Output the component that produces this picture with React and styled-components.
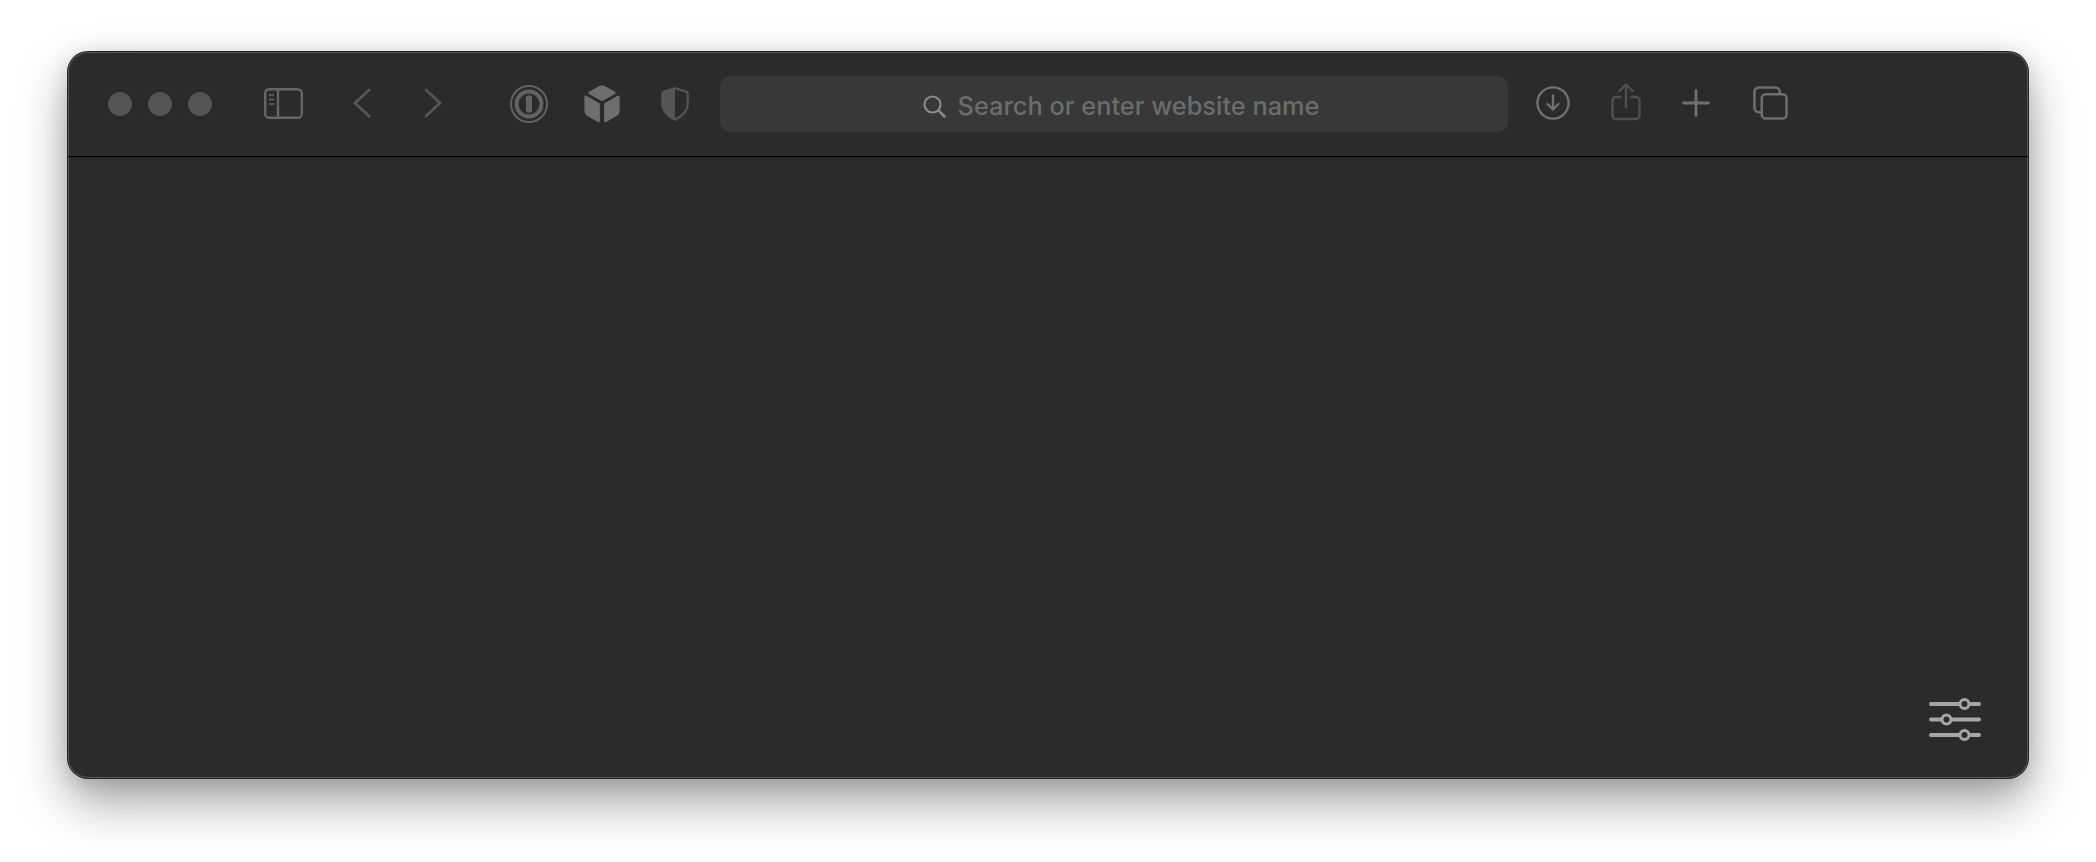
import React from "react";
import styled, { createGlobalStyle } from "styled-components";

const Global = createGlobalStyle`
  html, body { margin: 0; padding: 0; background: #fff; }
  body { width: 2096px; height: 862px; overflow: hidden; font-family: Inter, "Noto Sans", sans-serif; }
`;

const Page = styled.div`
  box-sizing: border-box;
  width: 2096px;
  height: 862px;
  padding: 52px 68px 84px;
  background: #fff;
`;

const Window = styled.main`
  box-sizing: border-box;
  display: flex;
  flex-direction: column;
  height: 726px;
  border-radius: 20px;
  background: #2b2b2b;
  overflow: hidden;
  box-shadow: 0 0 0 1px #242424, inset 0 0 0 1px #565656, 0 24px 50px rgba(0, 0, 0, 0.36), 0 4px 24px rgba(0, 0, 0, 0.14);
`;

const Toolbar = styled.header`
  box-sizing: border-box;
  flex: none;
  height: 105px;
  display: flex;
  align-items: flex-start;
  padding: 0 0 0 40px;
  border-bottom: 1px solid #000;
  box-shadow: 0 1px 0 rgba(0, 0, 0, 0.2);
`;

const Lights = styled.div`
  display: flex;
  gap: 16px;
  margin-top: 40px;
`;

const Light = styled.span`
  width: 24px;
  height: 24px;
  border-radius: 50%;
  background: #545454;
`;

const Slot = styled.div`
  flex: none;
  display: flex;
  margin-left: ${(p) => p.$left}px;
  margin-top: ${(p) => p.$top}px;
  color: ${(p) => p.$color};
`;

const AddressBar = styled.div`
  flex: none;
  box-sizing: border-box;
  width: 788px;
  height: 56px;
  margin: 24px 0 0 31px;
  padding: 4px 0 0 14px;
  display: flex;
  align-items: center;
  justify-content: center;
  gap: 12px;
  border-radius: 10px;
  background: #383838;
`;

const SearchGlyph = styled.span`
  display: flex;
  color: #8a8a8a;
`;

const Placeholder = styled.span`
  color: #6c6c6c;
  font-size: 25.35px;
  line-height: 30px;
  font-weight: 500;
  white-space: nowrap;
`;

const Content = styled.section`
  flex: 1;
  display: flex;
  align-items: flex-end;
  justify-content: flex-end;
  padding: 0 47px 36px 0;
`;

const SidebarIcon = () => (
  <svg width="39" height="31" viewBox="0 0 39 31" fill="none" stroke="currentColor" strokeWidth="2.4">
    <rect x="1.2" y="1.2" width="36.6" height="28.6" rx="4" />
    <path d="M14 1.2v28.6" />
    <path d="M5 7h5M5 11.5h5M5 16h5" strokeWidth="1.6" />
  </svg>
);
const ChevronLeft = () => (
  <svg width="18" height="30" viewBox="0 0 18 30" fill="none" stroke="currentColor" strokeWidth="2.8" strokeLinecap="round" strokeLinejoin="round">
    <path d="M16 2 2 15l14 13" />
  </svg>
);
const ChevronRight = () => (
  <svg width="18" height="30" viewBox="0 0 18 30" fill="none" stroke="currentColor" strokeWidth="2.8" strokeLinecap="round" strokeLinejoin="round">
    <path d="M2 2l14 13L2 28" />
  </svg>
);
const OnePassword = () => (
  <svg width="38" height="38" viewBox="0 0 38 38" fill="none" stroke="currentColor">
    <circle cx="19" cy="19" r="18" strokeWidth="2" />
    <circle cx="19" cy="19" r="12.5" strokeWidth="4" />
    <rect x="16" y="10.5" width="6" height="17" rx="1.5" fill="currentColor" stroke="none" />
  </svg>
);
const Cube = () => (
  <svg width="36" height="38" viewBox="0 0 36 38" fill="currentColor">
    <path d="M15.2 1a5.600 5.600 0 0 1 5.600 0l9.800 5.600c1.400.8 1.400 1.900 0 2.700L18.900 15.700a1.800 1.800 0 0 1-1.800 0L5.400 9.300c-1.400-.8-1.400-1.900 0-2.700z" />
    <path d="M.4 12c0-1.200 1-1.800 2-1.200L15 18a1.800 1.800 0 0 1 .9 1.500v16.300c0 1.300-1 1.900-2.100 1.300l-10.300-6A6 6 0 0 1 .4 26z" />
    <path d="M35.600 12c0-1.200-1-1.800-2-1.200L21 18a1.800 1.800 0 0 0-.9 1.500v16.300c0 1.300 1 1.900 2.100 1.300l10.300-6a6 6 0 0 0 3.100-5.100z" />
  </svg>
);
const Shield = () => (
  <svg width="28" height="34" viewBox="0 0 28 34" fill="none">
    <path d="M14 1.200 2.800 4.600c-.9.300-1.500 1-1.500 2v10.400c0 7 6.500 12.800 12.700 15.800 6.200-3 12.700-8.800 12.700-15.800V6.600c0-1-.6-1.700-1.500-2z" stroke="currentColor" strokeWidth="2.200" strokeLinejoin="round" />
    <path d="M14 1.200 2.800 4.600c-.9.300-1.500 1-1.500 2v10.400c0 7 6.500 12.800 12.700 15.800z" fill="currentColor" />
  </svg>
);
const Search = () => (
  <svg width="23" height="23" viewBox="0 0 23 23" fill="none" stroke="currentColor" strokeWidth="2.200" strokeLinecap="round">
    <circle cx="9.500" cy="9.500" r="8" />
    <path d="m15.500 15.500 6 6" strokeWidth="2.600" />
  </svg>
);
const Download = () => (
  <svg width="34" height="34" viewBox="0 0 34 34" fill="none" stroke="currentColor" strokeWidth="2.400" strokeLinecap="round" strokeLinejoin="round">
    <circle cx="17" cy="17" r="15.600" />
    <path d="M17 9.500v14M11.500 18l5.500 5.500 5.500-5.500" />
  </svg>
);
const Share = () => (
  <svg width="30" height="38" viewBox="0 0 30 38" fill="none" stroke="currentColor" strokeWidth="2.400" strokeLinecap="round" strokeLinejoin="round">
    <path d="M9.500 14H5a3.500 3.500 0 0 0-3.500 3.500v15A3.500 3.500 0 0 0 5 36h20a3.500 3.500 0 0 0 3.500-3.500v-15A3.500 3.500 0 0 0 25 14h-4.500" />
    <path d="M15 24V2M8.500 8 15 1.500 21.500 8" />
  </svg>
);
const Plus = () => (
  <svg width="28" height="28" viewBox="0 0 28 28" fill="none" stroke="currentColor" strokeWidth="2.800" strokeLinecap="round">
    <path d="M14 1.500v25M1.500 14h25" />
  </svg>
);
const Tabs = () => (
  <svg width="35" height="34" viewBox="0 0 36 35" fill="none" stroke="currentColor" strokeWidth="2.600">
    <path d="M9 27H6a4.500 4.500 0 0 1-4.500-4.500V6A4.500 4.500 0 0 1 6 1.500h17A4.500 4.500 0 0 1 27.500 6v2.500" />
    <rect x="9" y="8.500" width="25.500" height="25" rx="4" />
  </svg>
);
const Sliders = () => (
  <svg width="52" height="45" viewBox="0 0 52 45" fill="none" stroke="#a6a6a6" strokeWidth="4" strokeLinecap="round">
    <path d="M2 7h30M42 7h8M2 22.500h10M24 22.500h26M2 38h30M42 38h8" />
    <circle cx="35.500" cy="7" r="4.500" fill="#2b2b2b" strokeWidth="3" />
    <circle cx="17.500" cy="22.500" r="4.500" fill="#2b2b2b" strokeWidth="3" />
    <circle cx="35.500" cy="38" r="4.500" fill="#2b2b2b" strokeWidth="3" />
  </svg>
);

export default function App() {
  return (
    <Page>
      <Global />
      <Window>
        <Toolbar>
          <Lights>
            <Light />
            <Light />
            <Light />
          </Lights>
          <Slot $left={52} $top={36} $color="#666666"><SidebarIcon /></Slot>
          <Slot $left={50} $top={36} $color="#565656"><ChevronLeft /></Slot>
          <Slot $left={53} $top={36} $color="#565656"><ChevronRight /></Slot>
          <Slot $left={68} $top={33} $color="#626262"><OnePassword /></Slot>
          <Slot $left={36} $top={33} $color="#6e6e6e"><Cube /></Slot>
          <Slot $left={41} $top={35} $color="#555555"><Shield /></Slot>
          <AddressBar>
            <SearchGlyph><Search /></SearchGlyph>
            <Placeholder>Search or enter website name</Placeholder>
          </AddressBar>
          <Slot $left={28} $top={34} $color="#707070"><Download /></Slot>
          <Slot $left={41} $top={31} $color="#505050"><Share /></Slot>
          <Slot $left={41} $top={37} $color="#707070"><Plus /></Slot>
          <Slot $left={43} $top={34} $color="#6e6e6e"><Tabs /></Slot>
        </Toolbar>
        <Content><Sliders /></Content>
      </Window>
    </Page>
  );
}
